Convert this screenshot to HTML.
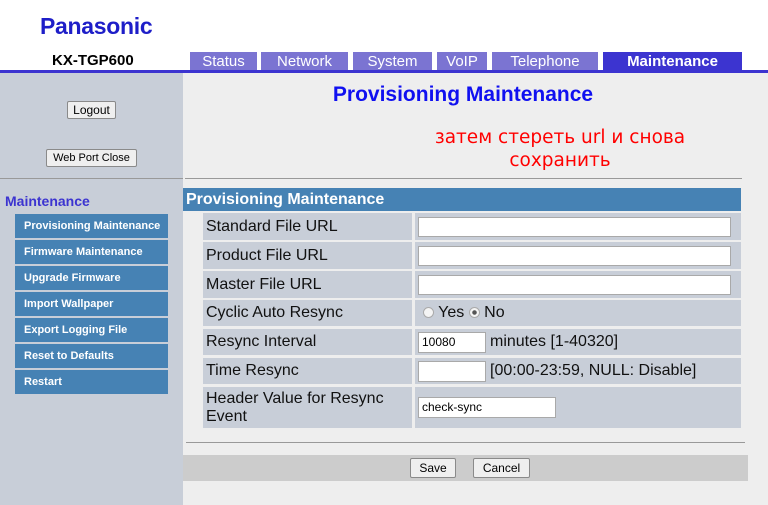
<!DOCTYPE html>
<html><head><meta charset="utf-8"><style>
*{margin:0;padding:0;box-sizing:border-box}
body{width:768px;height:505px;background:#fff;font-family:"Liberation Sans",Arial,sans-serif;position:relative;overflow:hidden}
.a{position:absolute}
.tab{position:absolute;top:52px;height:18px;background:#7b74d2;color:#fff;font-size:15px;text-align:center;line-height:19px}
.btn{position:absolute;background:#efefef;border:1px solid #8a8a8a;border-radius:2px;font-size:12px;color:#000;text-align:center}
.mi{position:absolute;left:15px;width:153px;height:24px;background:#4682b4;color:#fff;font-size:11px;font-weight:bold;padding-left:9px;line-height:24px}
.lab{position:absolute;left:203px;width:209px;background:#c8ced8;font-size:16px;color:#111;padding-left:3px}
.val{position:absolute;left:415px;width:326px;background:#c8ced8;font-size:16px;color:#111}
.inp{position:absolute;background:#fff;border:1px solid #a9a9a9;font-size:12px;padding-left:3px}
</style></head><body>
<div class="a" style="left:40px;top:13px;font-size:23px;font-weight:bold;color:#1e1ec8;letter-spacing:-0.3px">Panasonic</div>
<div class="a" style="left:52px;top:52px;font-size:15px;font-weight:bold;color:#000">KX-TGP600</div>
<div class="tab" style="left:190px;width:67px">Status</div>
<div class="tab" style="left:261px;width:87px">Network</div>
<div class="tab" style="left:353px;width:79px">System</div>
<div class="tab" style="left:437px;width:50px">VoIP</div>
<div class="tab" style="left:492px;width:106px">Telephone</div>
<div class="tab" style="left:603px;width:139px;background:#3c34d0;font-weight:bold">Maintenance</div>
<div class="a" style="left:0;top:70px;width:768px;height:3px;background:#3c34d0"></div>
<div class="a" style="left:0;top:73px;width:183px;height:432px;background:#c8ced8"></div>
<div class="a" style="left:183px;top:73px;width:585px;height:432px;background:#eeeeee"></div>
<div class="btn" style="left:67px;top:101px;width:49px;height:18px;line-height:16px">Logout</div>
<div class="btn" style="left:46px;top:149px;width:91px;height:18px;line-height:16px;font-size:11px">Web Port Close</div>
<div class="a" style="left:0;top:178px;width:183px;height:1px;background:#999"></div>
<div class="a" style="left:185px;top:178px;width:557px;height:1px;background:#999"></div>
<div class="a" style="left:183px;top:83px;width:560px;text-align:center;font-size:21px;font-weight:bold;color:#1010f0">Provisioning Maintenance</div>
<div class="a" style="left:410px;top:126px;width:300px;text-align:center;font-size:18.5px;line-height:23px;color:#f00;font-family:'DejaVu Sans',sans-serif">затем стереть url и снова<br>сохранить</div>
<div class="a" style="left:5px;top:193px;font-size:14px;font-weight:bold;color:#3c34d0">Maintenance</div>
<div class="mi" style="top:214px">Provisioning Maintenance</div>
<div class="mi" style="top:240px">Firmware Maintenance</div>
<div class="mi" style="top:266px">Upgrade Firmware</div>
<div class="mi" style="top:292px">Import Wallpaper</div>
<div class="mi" style="top:318px">Export Logging File</div>
<div class="mi" style="top:344px">Reset to Defaults</div>
<div class="mi" style="top:370px">Restart</div>
<div class="a" style="left:183px;top:188px;width:558px;height:23px;background:#4682b4;color:#fff;font-size:16px;font-weight:bold;padding-left:3px;line-height:23px">Provisioning Maintenance</div>
<div class="lab" style="top:213px;height:27px;line-height:27px">Standard File URL</div>
<div class="val" style="top:213px;height:27px"></div><div class="inp" style="left:418px;top:217px;width:313px;height:20px"></div>
<div class="lab" style="top:242px;height:27px;line-height:27px">Product File URL</div>
<div class="val" style="top:242px;height:27px"></div><div class="inp" style="left:418px;top:246px;width:313px;height:20px"></div>
<div class="lab" style="top:271px;height:27px;line-height:27px">Master File URL</div>
<div class="val" style="top:271px;height:27px"></div><div class="inp" style="left:418px;top:275px;width:313px;height:20px"></div>
<div class="lab" style="top:300px;height:26px;line-height:26px">Cyclic Auto Resync</div>
<div class="val" style="top:300px;height:26px;line-height:26px;padding-left:8px"><span style="display:inline-block;width:11px;height:11px;border-radius:50%;border:1px solid #aaa;background:#f4f4f4;vertical-align:-1px"></span> Yes <span style="display:inline-block;width:11px;height:11px;border-radius:50%;border:1px solid #aaa;background:radial-gradient(#555 0 2px,#f4f4f4 2.5px);vertical-align:-1px"></span> No</div>
<div class="lab" style="top:329px;height:26px;line-height:26px">Resync Interval</div>
<div class="val" style="top:329px;height:26px;line-height:26px;padding-left:75px">minutes [1-40320]</div><div class="inp" style="left:418px;top:332px;width:68px;height:21px;line-height:19px">10080</div>
<div class="lab" style="top:358px;height:26px;line-height:26px">Time Resync</div>
<div class="val" style="top:358px;height:26px;line-height:26px;padding-left:75px">[00:00-23:59, NULL: Disable]</div><div class="inp" style="left:418px;top:361px;width:68px;height:21px"></div>
<div class="lab" style="top:387px;height:41px;line-height:18px;padding-top:3px">Header Value for Resync Event</div>
<div class="val" style="top:387px;height:41px"></div><div class="inp" style="left:418px;top:397px;width:138px;height:21px;line-height:19px">check-sync</div>
<div class="a" style="left:186px;top:442px;width:559px;height:1px;background:#999"></div>
<div class="a" style="left:183px;top:455px;width:565px;height:26px;background:#cccccc"></div>
<div class="btn" style="left:410px;top:458px;width:46px;height:20px;line-height:18px">Save</div>
<div class="btn" style="left:473px;top:458px;width:57px;height:20px;line-height:18px">Cancel</div>
</body></html>
